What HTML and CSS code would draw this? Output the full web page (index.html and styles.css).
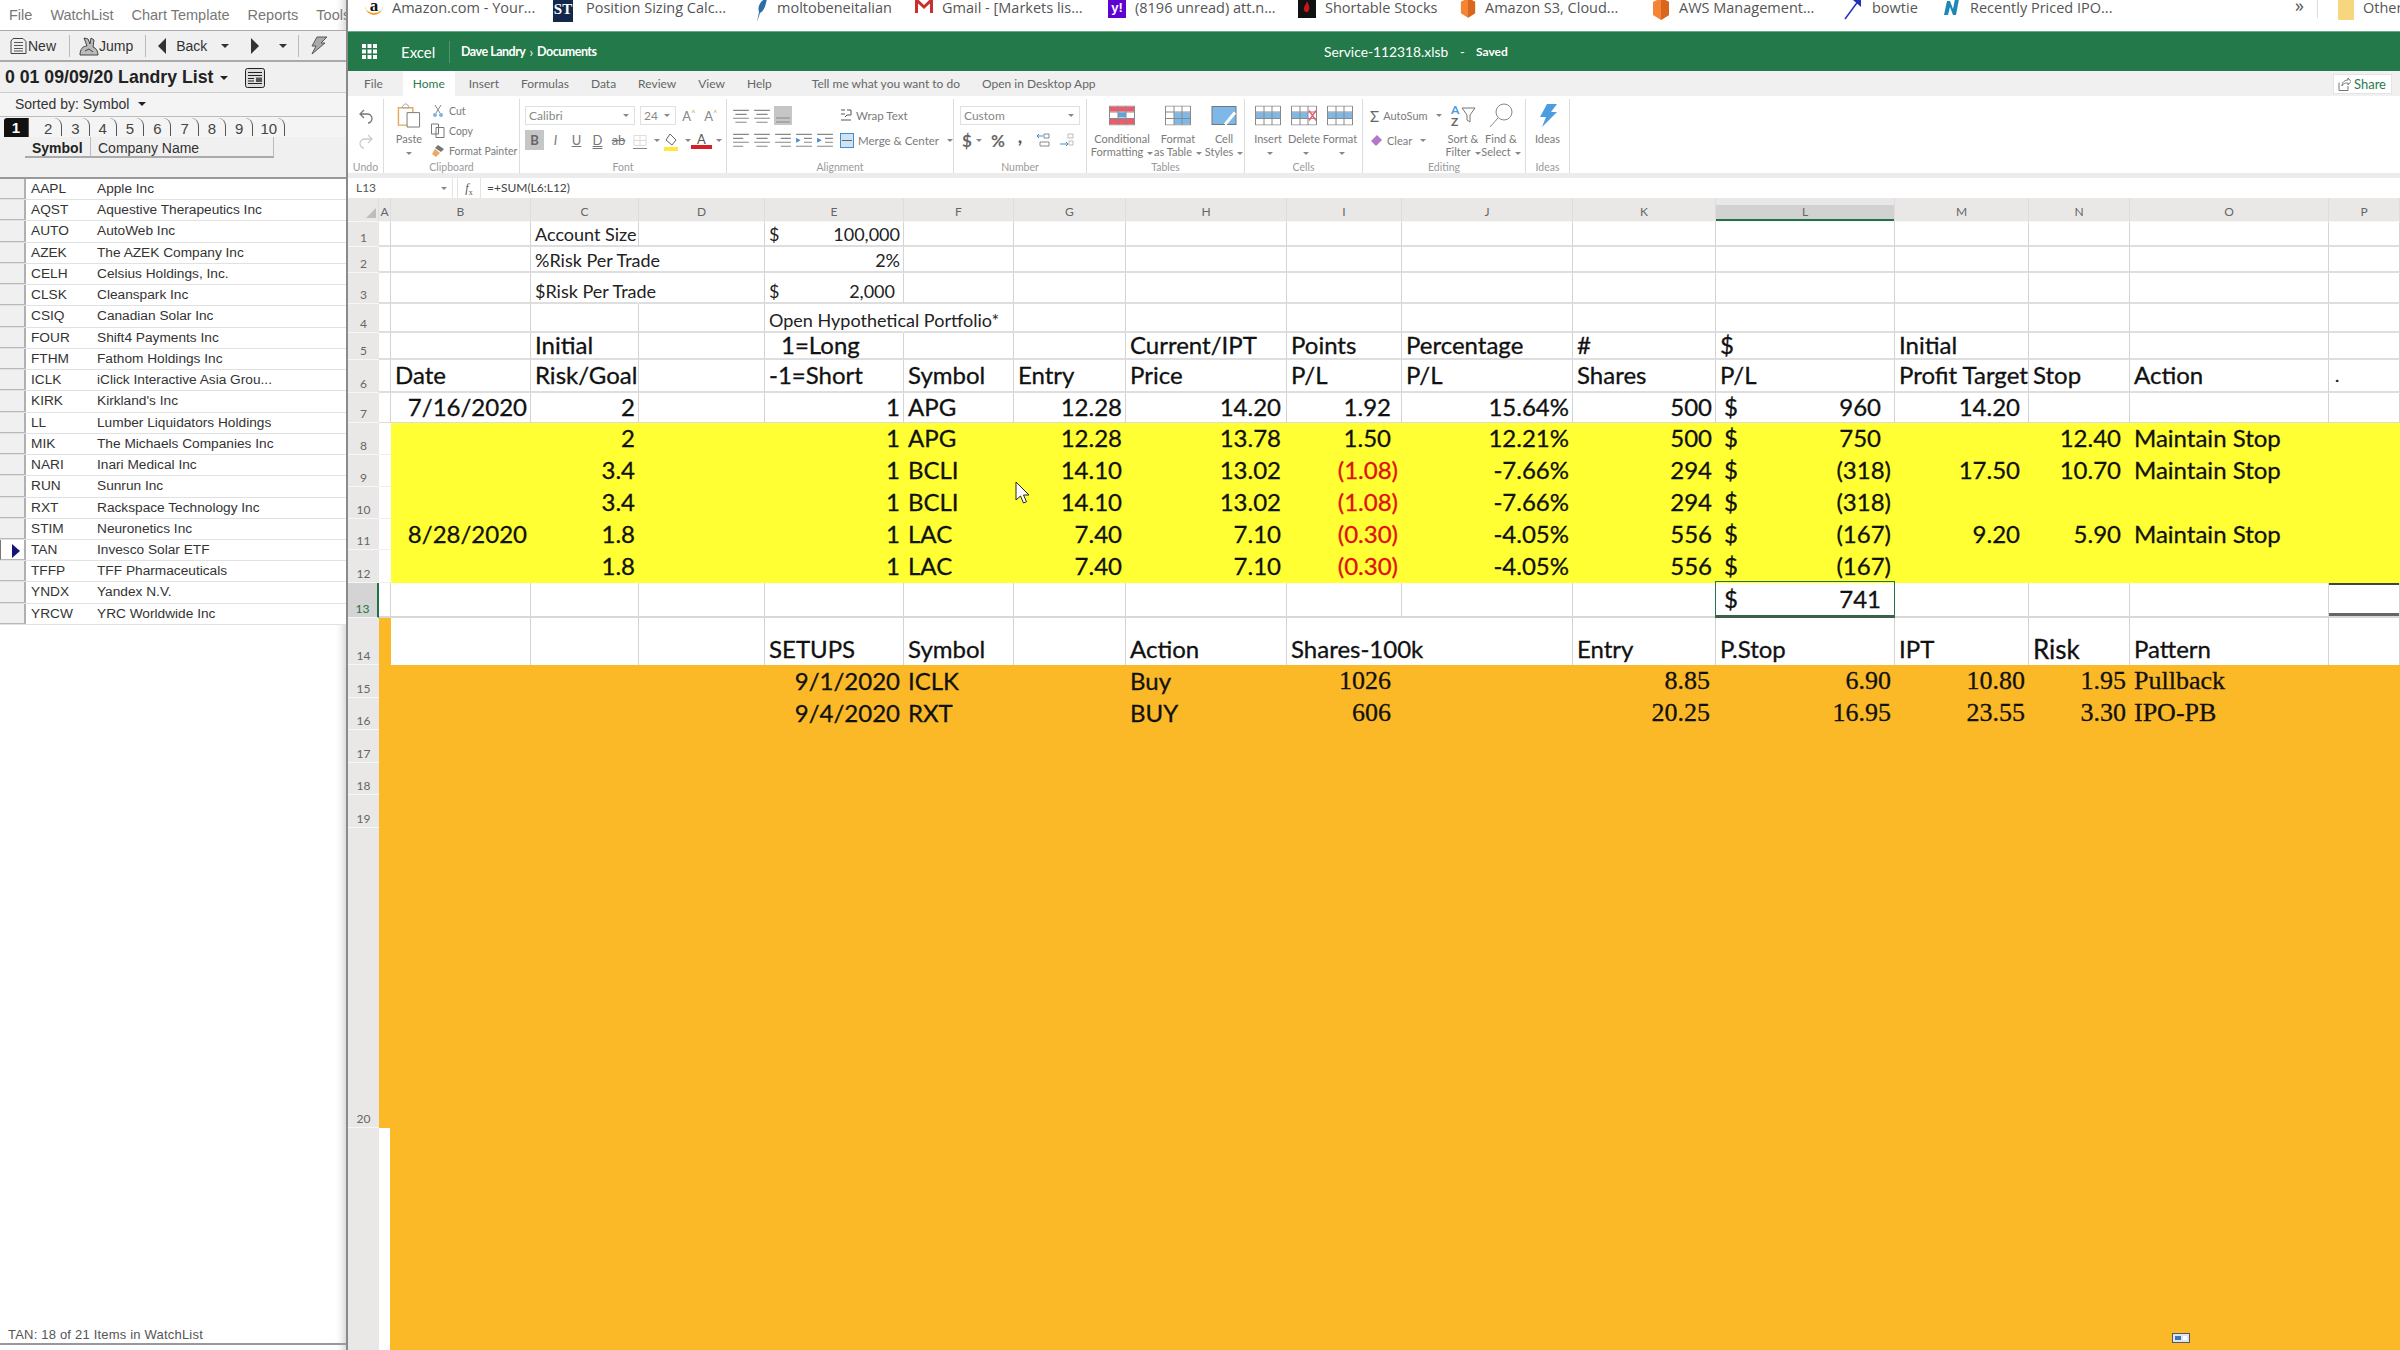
FILE: index.html
```html
<!DOCTYPE html>
<html lang="en">
<head>
    <meta charset="UTF-8">
    <meta name="viewport" content="width=device-width, initial-scale=1.0">
    <title>Service-112318.xlsb - Excel</title>
    <link rel="stylesheet" href="styles.css">
</head>
<body>
<svg class="defs" width="0" height="0">
    <symbol id="i-lines-l" viewBox="0 0 16 16"><path d="M1 3h14M1 6.500h9M1 10h14M1 13.500h9" stroke="#888" fill="none"/></symbol>
    <symbol id="i-lines-c" viewBox="0 0 16 16"><path d="M1 3h14M3 6.500h10M1 10h14M3 13.500h10" stroke="#888" fill="none"/></symbol>
    <symbol id="i-lines-r" viewBox="0 0 16 16"><path d="M1 3h14M6 6.500h9M1 10h14M6 13.500h9" stroke="#888" fill="none"/></symbol>
    <symbol id="i-indent" viewBox="0 0 16 16"><path d="M1 3h14M8 6.500h7M8 10h7M1 13.500h14" stroke="#888" fill="none"/><path d="M1 6l4 2.200-4 2.200z" fill="#3f8fd6"/></symbol>
    <symbol id="i-hex" viewBox="0 0 18 22"><path d="M9 0l8 4v13l-8 5-8-5V4z" fill="#f58534"/><path d="M9 0l8 4v13l-8 5z" fill="#d9661f"/></symbol>
    <symbol id="i-grid" viewBox="0 0 26 20"><path fill="none" stroke="#8a8a8a" d="M.5.500h25v19H.5zM.5 6.500h25M.5 13h25M9 .5v19M17 .5v19"/></symbol>
</svg>

<div class="app">
    <aside class="watch">
        <div class="wmenu"><span>File</span><span>WatchList</span><span>Chart Template</span><span>Reports</span><span>Tools</span></div>
        <div class="wtools">
            <svg class="wicon" width="17" height="18" viewBox="0 0 17 18"><path d="M3 1.500h10l3 3v12H1V4z" fill="#eee" stroke="#444"/><path d="M4 5.500h9M4 8.500h9M4 11.500h9M4 14h9" stroke="#555"/></svg>
            <span class="wt-new">New</span>
            <i class="wsep s1"></i>
            <svg class="wicon j" width="20" height="20" viewBox="0 0 20 20"><path d="M1 19c0-6 3-9 7-9l-3-8 4 1 2 5 1-6 3 2-1 7c3 1 5 4 5 8z" fill="#bbb" stroke="#444"/><path d="M6 15l4-2 4 3" fill="none" stroke="#444"/></svg>
            <span class="wt-jump">Jump</span>
            <i class="wsep s2"></i>
            <i class="tri-l"></i><span class="wt-back">Back</span><i class="caret c1"></i>
            <i class="tri-r"></i><i class="caret c2"></i>
            <i class="wsep s3"></i>
            <svg class="bolt" width="19" height="19" viewBox="0 0 19 19"><path d="M8 1h10l-6 6h4L3 18l4-8H3z" fill="#aaa" stroke="#555"/></svg>
        </div>
        <div class="wtitle">
            <b>0 01 09/09/20 Landry List</b><i class="caret dark"></i>
            <svg class="news" width="20" height="20" viewBox="0 0 20 20"><rect x=".5" y=".5" width="19" height="19" rx="2" fill="#ddd" stroke="#222"/><path d="M3 4.500h14M3 7.500h14M3 10.500h6M3 13h6M3 15.500h14" stroke="#222"/><rect x="11" y="9.500" width="6" height="4.500" fill="#555"/></svg>
        </div>
        <div class="wsort"><span>Sorted by: Symbol</span><i class="caret dark"></i></div>
        <div class="wtabs">
            <span class="wtab on">1</span><span class="wtab">2</span><span class="wtab">3</span><span class="wtab">4</span><span class="wtab">5</span><span class="wtab">6</span><span class="wtab">7</span><span class="wtab">8</span><span class="wtab">9</span><span class="wtab ten">10</span>
        </div>
        <div class="whead"><b>Symbol</b><span>Company Name</span></div>
        <div class="wblank"></div>
        <div class="wlist">
            <div class="wrow"><i></i><span>AAPL</span><span>Apple Inc</span></div>
            <div class="wrow"><i></i><span>AQST</span><span>Aquestive Therapeutics Inc</span></div>
            <div class="wrow"><i></i><span>AUTO</span><span>AutoWeb Inc</span></div>
            <div class="wrow"><i></i><span>AZEK</span><span>The AZEK Company Inc</span></div>
            <div class="wrow"><i></i><span>CELH</span><span>Celsius Holdings, Inc.</span></div>
            <div class="wrow"><i></i><span>CLSK</span><span>Cleanspark Inc</span></div>
            <div class="wrow"><i></i><span>CSIQ</span><span>Canadian Solar Inc</span></div>
            <div class="wrow"><i></i><span>FOUR</span><span>Shift4 Payments Inc</span></div>
            <div class="wrow"><i></i><span>FTHM</span><span>Fathom Holdings Inc</span></div>
            <div class="wrow"><i></i><span>ICLK</span><span>iClick Interactive Asia Grou...</span></div>
            <div class="wrow"><i></i><span>KIRK</span><span>Kirkland's Inc</span></div>
            <div class="wrow"><i></i><span>LL</span><span>Lumber Liquidators Holdings</span></div>
            <div class="wrow"><i></i><span>MIK</span><span>The Michaels Companies Inc</span></div>
            <div class="wrow"><i></i><span>NARI</span><span>Inari Medical Inc</span></div>
            <div class="wrow"><i></i><span>RUN</span><span>Sunrun Inc</span></div>
            <div class="wrow"><i></i><span>RXT</span><span>Rackspace Technology Inc</span></div>
            <div class="wrow"><i></i><span>STIM</span><span>Neuronetics Inc</span></div>
            <div class="wrow cur"><i></i><span>TAN</span><span>Invesco Solar ETF</span></div>
            <div class="wrow"><i></i><span>TFFP</span><span>TFF Pharmaceuticals</span></div>
            <div class="wrow"><i></i><span>YNDX</span><span>Yandex N.V.</span></div>
            <div class="wrow"><i></i><span>YRCW</span><span>YRC Worldwide Inc</span></div>
        </div>
        <div class="wstatus">TAN: 18 of 21 Items in WatchList</div>
    </aside>

    <main class="excel">
        <nav class="bookmarks">
            <div class="bm"><span class="amz">a</span>Amazon.com - Your...</div>
            <div class="bm"><span class="st">ST</span>Position Sizing Calc...</div>
            <div class="bm"><svg width="12" height="24" viewBox="0 0 12 24"><path d="M11 0C5 2 1 8 3 14L1 24l3-9c4-2 6-8 7-15z" fill="#2a6ea8"/></svg>moltobeneitalian</div>
            <div class="bm"><svg width="18" height="16" viewBox="0 0 18 16"><path d="M1.500 15V2L9 9l7.500-7v13" fill="none" stroke="#c9302c" stroke-width="3"/></svg>Gmail - [Markets lis...</div>
            <div class="bm"><span class="yh">y!</span>(8196 unread) att.n...</div>
            <div class="bm"><svg width="18" height="20" viewBox="0 0 18 20"><rect width="18" height="20" fill="#111"/><path d="M9 3c2 4 3 6 2 9s-4 3-5 0 2-5 3-9z" fill="#c4161c"/></svg>Shortable Stocks</div>
            <div class="bm"><svg width="16" height="20"><use href="#i-hex"/></svg>Amazon S3, Cloud...</div>
            <div class="bm"><svg width="18" height="22"><use href="#i-hex"/></svg>AWS Management...</div>
            <div class="bm"><svg width="20" height="22" viewBox="0 0 20 22"><path d="M2 21L16 2" stroke="#2233bb" stroke-width="1.500"/><path d="M10 2h8v7z" fill="#2233bb"/></svg>bowtie</div>
            <div class="bm"><svg width="18" height="18" viewBox="0 0 18 18"><path d="M1 17L4 3h3l3 8 2-10h4l-3 16h-3L7 9l-2 8z" fill="#1d87b5"/></svg>Recently Priced IPO...</div>
            <div class="bm more">&raquo;</div>
            <div class="bm other"><svg width="16" height="22" viewBox="0 0 16 22"><rect width="16" height="22" rx="1" fill="#f6d67f"/></svg>Other</div>
        </nav>

        <header class="titlebar">
            <svg class="waffle" width="15" height="15" viewBox="0 0 15 15" fill="#fff"><path d="M0 0h4v4H0zM5.500 0h4v4h-4zM11 0h4v4h-4zM0 5.500h4v4H0zM5.500 5.500h4v4h-4zM11 5.500h4v4h-4zM0 11h4v4H0zM5.500 11h4v4h-4zM11 11h4v4h-4z"/></svg>
            <span class="app-name">Excel</span>
            <i class="tsep"></i>
            <span class="crumb">Dave Landry</span><span class="crumb-arrow">&rsaquo;</span><span class="crumb">Documents</span>
            <span class="fname">Service-112318.xlsb</span><span class="fdash">-</span><span class="fsaved">Saved</span>
        </header>

        <div class="tabs">
            <span>File</span><span class="home">Home</span><span class="after-home">Insert</span><span>Formulas</span><span>Data</span><span>Review</span><span>View</span><span>Help</span><span class="tell">Tell me what you want to do</span><span>Open in Desktop App</span>
            <button class="share"><svg width="13" height="14" viewBox="0 0 13 14"><path d="M1 5.500v8h9V9M4 9c0-4 3-6 6-6V1l3 3.500L10 8V6C8 6 5 6 4 9z" fill="none" stroke="#777"/></svg>Share</button>
        </div>

        <section class="ribbon">
            <div class="rgroup g-undo">
                <div class="rbody col-c">
                    <svg width="16" height="16" viewBox="0 0 16 16"><path d="M6 2L2 6l4 4M2 6h7c3 0 5 2 5 4.500S12 15 10 15" fill="none" stroke="#777" stroke-width="1.300"/></svg>
                    <svg width="16" height="16" viewBox="0 0 16 16"><path d="M10 2l4 4-4 4M14 6H7c-3 0-5 2-5 4.500S4 15 6 15" fill="none" stroke="#ccc" stroke-width="1.300"/></svg>
                </div>
                <div class="rlabel">Undo</div>
            </div>
            <div class="rgroup g-clip">
                <div class="rbody row">
                    <div class="big paste">
                        <svg width="24" height="26" viewBox="0 0 24 26"><path d="M1 5h15v18H1z" fill="#fff" stroke="#e8a95c" stroke-width="1.500"/><path d="M5 5c0-2 2-4 3.500-4S12 3 12 5z" fill="#fff" stroke="#999"/><path d="M10 10h13v15H10z" fill="#fff" stroke="#777"/></svg>
                        <span>Paste</span><i class="caret"></i>
                    </div>
                    <div class="stack clip">
                        <div class="ri"><svg width="12" height="14" viewBox="0 0 12 14"><path d="M3 1l5 8M9 1L4 9" stroke="#888"/><circle cx="3" cy="11" r="2" fill="#7eb3e0"/><circle cx="9" cy="11" r="2" fill="#7eb3e0"/></svg>Cut</div>
                        <div class="ri"><svg width="14" height="15" viewBox="0 0 14 15"><path d="M.5 1h7v10h-7zM5 4.500h8v10H5z" fill="#fff" stroke="#777"/></svg>Copy</div>
                        <div class="ri"><svg width="14" height="14" viewBox="0 0 14 14"><path d="M7 1l6 4-3 3-6-4z" fill="#777"/><path d="M4 5l5 4-4 4-4-3z" fill="#eda764"/></svg>Format Painter</div>
                    </div>
                </div>
                <div class="rlabel">Clipboard</div>
            </div>
            <div class="rgroup g-font">
                <div class="rbody col">
                    <div class="frow">
                        <div class="select f-name">Calibri<i class="caret"></i></div>
                        <div class="select f-size">24<i class="caret"></i></div>
                        <span class="fgl a-up">A<sup>^</sup></span><span class="fgl a-dn">A<sup>^</sup></span>
                    </div>
                    <div class="frow r2">
                        <span class="fbtn on">B</span><span class="fbtn it">I</span><span class="fbtn un">U</span><span class="fbtn db">D</span><span class="fbtn st-k">ab</span>
                        <span class="fbtn"><svg width="14" height="16" viewBox="0 0 14 16"><path d="M1 1.500h12v10H1zM7 1.500v10M1 6.500h12" fill="none" stroke="#ddd"/><path d="M0 14.500h14" stroke="#888"/></svg></span><i class="caret sm"></i>
                        <span class="fbtn"><svg width="16" height="18" viewBox="0 0 16 18"><path d="M7 1l6 6-4 5-6-5z" fill="#fff" stroke="#666"/><rect x="1" y="14" width="14" height="4" fill="#ffe83d"/></svg></span><i class="caret sm"></i>
                        <span class="fbtn col-a">A</span><i class="caret sm"></i>
                    </div>
                </div>
                <div class="rlabel">Font</div>
            </div>
            <div class="rgroup g-align">
                <div class="rbody row">
                    <div class="col al">
                        <div class="frow al-r1">
                            <svg width="18" height="18"><use href="#i-lines-c"/></svg><svg width="18" height="18"><use href="#i-lines-c"/></svg><span class="al-on"><svg width="18" height="8" viewBox="0 0 18 8"><path d="M2 2h14M2 6h14" stroke="#888"/></svg></span>
                        </div>
                        <div class="frow al-r2">
                            <svg width="18" height="18"><use href="#i-lines-l"/></svg><svg width="18" height="18"><use href="#i-lines-c"/></svg><svg width="18" height="18"><use href="#i-lines-r"/></svg><svg width="18" height="18"><use href="#i-indent"/></svg><svg width="18" height="18"><use href="#i-indent"/></svg>
                        </div>
                    </div>
                    <div class="stack wide">
                        <div class="ri"><svg width="12" height="15" viewBox="0 0 12 15"><path d="M1 2h4M1 6h4M7 2h4v5H7M7 7l-2 2M1 12h10" stroke="#555" fill="none"/></svg>Wrap Text</div>
                        <div class="ri"><svg width="14" height="15" viewBox="0 0 14 15"><rect x=".5" y=".5" width="13" height="14" fill="#cfe3f5" stroke="#3f8fd6"/><path d="M2 7.500h10" stroke="#666"/></svg>Merge &amp; Center<i class="caret sm"></i></div>
                    </div>
                </div>
                <div class="rlabel">Alignment</div>
            </div>
            <div class="rgroup g-num">
                <div class="rbody col">
                    <div class="select n-fmt">Custom<i class="caret"></i></div>
                    <div class="frow n-r2">
                        <b class="dollar">$</b><i class="caret sm"></i><b class="pct">%</b><b class="comma">,</b>
                        <svg width="16" height="16" viewBox="0 0 16 16"><path d="M8 4H2m2-2L2 4l2 2" stroke="#3f8fd6" fill="none"/><path d="M9 2h5v4H9zM5 10h9v4H5z" fill="none" stroke="#888"/></svg>
                        <svg width="16" height="16" viewBox="0 0 16 16"><path d="M1 12h8m-2-2l2 2-2 2" stroke="#3f8fd6" fill="none"/><path d="M9 2h5v4H9zM10 9h4v4h-4z" fill="none" stroke="#bbb"/></svg>
                    </div>
                </div>
                <div class="rlabel">Number</div>
            </div>
            <div class="rgroup g-tbl">
                <div class="rbody row">
                    <div class="big w-cond"><svg width="26" height="20" viewBox="0 0 26 20"><rect width="26" height="20" fill="#fff"/><path d="M1 1h24v5H1zM1 13h24v6H1z" fill="#ef5a6b"/><path d="M9 7h8v5H9z" fill="#5aa6e0"/><use href="#i-grid" width="26" height="20"/></svg><span>Conditional<br>Formatting<i class="caret sm"></i></span></div>
                    <div class="big w-fmt"><svg width="26" height="20" viewBox="0 0 26 20"><path d="M9 7h16v12H9z" fill="#7db8e8"/><use href="#i-grid" width="26" height="20"/></svg><span>Format<br>as Table<i class="caret sm"></i></span></div>
                    <div class="big w-cell"><svg width="26" height="20" viewBox="0 0 26 20"><rect x="1" y="1" width="24" height="18" fill="#7db8e8" stroke="#777"/><path d="M14 19l10-12" stroke="#fff" stroke-width="3"/></svg><span>Cell<br>Styles<i class="caret sm"></i></span></div>
                </div>
                <div class="rlabel">Tables</div>
            </div>
            <div class="rgroup g-cells">
                <div class="rbody row">
                    <div class="big w-36"><svg width="26" height="20" viewBox="0 0 26 20"><path d="M1 7h24v6H1z" fill="#7db8e8"/><use href="#i-grid" width="26" height="20"/></svg><span>Insert<br><i class="caret sm"></i></span></div>
                    <div class="big w-36"><svg width="26" height="20" viewBox="0 0 26 20"><path d="M1 7h16v6H1z" fill="#7db8e8"/><use href="#i-grid" width="26" height="20"/><path d="M18 5l7 10M25 5l-7 10" stroke="#e8637a" stroke-width="1.500"/></svg><span>Delete<br><i class="caret sm"></i></span></div>
                    <div class="big w-36"><svg width="26" height="20" viewBox="0 0 26 20"><path d="M1 7h24v6H1z" fill="#7db8e8"/><use href="#i-grid" width="26" height="20"/></svg><span>Format<br><i class="caret sm"></i></span></div>
                </div>
                <div class="rlabel">Cells</div>
            </div>
            <div class="rgroup g-edit">
                <div class="rbody row">
                    <div class="stack ed">
                        <div class="ri"><span class="sigma">&Sigma;</span>AutoSum<i class="caret sm"></i></div>
                        <div class="ri"><svg width="13" height="13" viewBox="0 0 13 13"><path d="M7 1l5 5-6 6-5-5z" fill="#b578c9"/></svg>Clear<i class="caret sm"></i></div>
                    </div>
                    <div class="big w-38"><svg width="26" height="25" viewBox="0 0 26 25"><text x="1" y="11" class="az blue">A</text><text x="1" y="23" class="az">Z</text><path d="M12 5h13l-5 7v7l-3-2v-5z" fill="none" stroke="#777"/></svg><span>Sort &amp;<br>Filter<i class="caret sm"></i></span></div>
                    <div class="big w-38"><svg width="26" height="25" viewBox="0 0 26 25"><circle cx="16" cy="9" r="8" fill="none" stroke="#888"/><path d="M10 15L2 24" stroke="#888"/></svg><span>Find &amp;<br>Select<i class="caret sm"></i></span></div>
                </div>
                <div class="rlabel">Editing</div>
            </div>
            <div class="rgroup g-ideas">
                <div class="rbody row">
                    <div class="big"><svg width="20" height="25" viewBox="0 0 20 25"><path d="M9 1h10l-6 8h6L4 24l4-10H2z" fill="#4d9be0"/></svg><span>Ideas</span></div>
                </div>
                <div class="rlabel">Ideas</div>
            </div>
        </section>

        <div class="formula">
            <div class="namebox">L13<i class="caret"></i></div>
            <div class="fx"><i>f</i><sub>x</sub></div>
            <div class="finput">=+SUM(L6:L12)</div>
        </div>

        <div class="sheet">
            <table class="grid">
                <colgroup>
                    <col class="c-hd"><col class="c-a"><col class="c-b"><col class="c-c"><col class="c-d"><col class="c-e"><col class="c-f"><col class="c-g"><col class="c-h"><col class="c-i"><col class="c-j"><col class="c-k"><col class="c-l"><col class="c-m"><col class="c-n"><col class="c-o"><col class="c-p">
                </colgroup>
                <tr class="colhead"><th class="corner"><i></i></th><th>A</th><th>B</th><th>C</th><th>D</th><th>E</th><th>F</th><th>G</th><th>H</th><th>I</th><th>J</th><th>K</th><th class="sel-col"><span>L</span></th><th>M</th><th>N</th><th>O</th><th>P</th></tr>

                <tr class="r1 small"><th>1</th><td></td><td></td><td>Account Size</td><td></td><td class="n"><span class="cash">$</span>100,000</td><td></td><td></td><td></td><td></td><td></td><td></td><td></td><td></td><td></td><td></td><td></td></tr>
                <tr class="r2 small"><th>2</th><td></td><td></td><td class="nl">%Risk Per Trade</td><td></td><td class="n">2%</td><td></td><td></td><td></td><td></td><td></td><td></td><td></td><td></td><td></td><td></td><td></td></tr>
                <tr class="r3 small"><th>3</th><td></td><td></td><td class="nl">$Risk Per Trade</td><td></td><td class="n pad8"><span class="cash">$</span>2,000</td><td></td><td></td><td></td><td></td><td></td><td></td><td></td><td></td><td></td><td></td><td></td></tr>
                <tr class="r4 small"><th>4</th><td></td><td></td><td></td><td></td><td class="nl">Open Hypothetical Portfolio*</td><td></td><td></td><td></td><td></td><td></td><td></td><td></td><td></td><td></td><td></td><td></td></tr>
                <tr class="r5"><th>5</th><td></td><td></td><td>Initial</td><td></td><td class="ind">1=Long</td><td></td><td></td><td>Current/IPT</td><td>Points</td><td>Percentage</td><td>#</td><td>$</td><td>Initial</td><td></td><td></td><td></td></tr>
                <tr class="r6"><th>6</th><td></td><td>Date</td><td>Risk/Goal</td><td></td><td>-1=Short</td><td>Symbol</td><td>Entry</td><td>Price</td><td>P/L</td><td>P/L</td><td>Shares</td><td>P/L</td><td>Profit Target</td><td>Stop</td><td>Action</td><td class="dot">.</td></tr>
                <tr class="r7"><th>7</th><td></td><td class="n">7/16/2020</td><td class="n">2</td><td></td><td class="n">1</td><td>APG</td><td class="n">12.28</td><td class="n pad5">14.20</td><td class="n pad10">1.92</td><td class="n">15.64%</td><td class="n">500</td><td class="n pad13 acct"><span class="cash">$</span>960</td><td class="n pad8">14.20</td><td></td><td></td><td></td></tr>
                <tr class="r8 hl"><th>8</th><td class="a"></td><td></td><td class="n">2</td><td></td><td class="n">1</td><td>APG</td><td class="n">12.28</td><td class="n pad5">13.78</td><td class="n pad10">1.50</td><td class="n">12.21%</td><td class="n">500</td><td class="n pad13 acct"><span class="cash">$</span>750</td><td></td><td class="n pad8">12.40</td><td>Maintain Stop</td><td></td></tr>
                <tr class="r9 hl"><th>9</th><td class="a"></td><td></td><td class="n">3.4</td><td></td><td class="n">1</td><td>BCLI</td><td class="n">14.10</td><td class="n pad5">13.02</td><td class="n red">(1.08)</td><td class="n">-7.66%</td><td class="n">294</td><td class="n acct"><span class="cash">$</span>(318)</td><td class="n pad8">17.50</td><td class="n pad8">10.70</td><td>Maintain Stop</td><td></td></tr>
                <tr class="r10 hl"><th>10</th><td class="a"></td><td></td><td class="n">3.4</td><td></td><td class="n">1</td><td>BCLI</td><td class="n">14.10</td><td class="n pad5">13.02</td><td class="n red">(1.08)</td><td class="n">-7.66%</td><td class="n">294</td><td class="n acct"><span class="cash">$</span>(318)</td><td></td><td></td><td></td><td></td></tr>
                <tr class="r11 hl"><th>11</th><td class="a"></td><td class="n">8/28/2020</td><td class="n">1.8</td><td></td><td class="n">1</td><td>LAC</td><td class="n">7.40</td><td class="n pad5">7.10</td><td class="n red">(0.30)</td><td class="n">-4.05%</td><td class="n">556</td><td class="n acct"><span class="cash">$</span>(167)</td><td class="n pad8">9.20</td><td class="n pad8">5.90</td><td>Maintain Stop</td><td></td></tr>
                <tr class="r12 hl"><th>12</th><td class="a"></td><td></td><td class="n">1.8</td><td></td><td class="n">1</td><td>LAC</td><td class="n">7.40</td><td class="n pad5">7.10</td><td class="n red">(0.30)</td><td class="n">-4.05%</td><td class="n">556</td><td class="n acct"><span class="cash">$</span>(167)</td><td></td><td></td><td></td><td></td></tr>
                <tr class="r13"><th class="sel-row">13</th><td></td><td></td><td></td><td></td><td></td><td></td><td></td><td></td><td></td><td></td><td></td><td class="n pad13 acct sel-cell"><span class="cash">$</span>741</td><td></td><td></td><td></td><td class="ruled"></td></tr>
                <tr class="r14"><th>14</th><td class="a-org"></td><td></td><td></td><td></td><td>SETUPS</td><td>Symbol</td><td></td><td>Action</td><td class="nl">Shares-100k</td><td></td><td>Entry</td><td>P.Stop</td><td>IPT</td><td class="big-t">Risk</td><td>Pattern</td><td></td></tr>
                <tr class="r15 org"><th>15</th><td></td><td></td><td></td><td></td><td class="n">9/1/2020</td><td>ICLK</td><td></td><td>Buy</td><td class="n tm pad10">1026</td><td></td><td class="n tm pad5">8.85</td><td class="n tm">6.90</td><td class="n tm">10.80</td><td class="n tm">1.95</td><td class="tm">Pullback</td><td></td></tr>
                <tr class="r16 org"><th>16</th><td></td><td></td><td></td><td></td><td class="n">9/4/2020</td><td>RXT</td><td></td><td>BUY</td><td class="n tm pad10">606</td><td></td><td class="n tm pad5">20.25</td><td class="n tm">16.95</td><td class="n tm">23.55</td><td class="n tm">3.30</td><td class="tm">IPO-PB</td><td></td></tr>
                <tr class="r17 org"><th>17</th><td></td><td></td><td></td><td></td><td></td><td></td><td></td><td></td><td></td><td></td><td></td><td></td><td></td><td></td><td></td><td></td></tr>
                <tr class="r18 org"><th>18</th><td></td><td></td><td></td><td></td><td></td><td></td><td></td><td></td><td></td><td></td><td></td><td></td><td></td><td></td><td></td><td></td></tr>
                <tr class="r19 org"><th>19</th><td></td><td></td><td></td><td></td><td></td><td></td><td></td><td></td><td></td><td></td><td></td><td></td><td></td><td></td><td></td><td></td></tr>
                <tr class="r20 org"><th>20</th><td></td><td></td><td></td><td></td><td></td><td></td><td></td><td></td><td></td><td></td><td></td><td></td><td></td><td></td><td></td><td></td></tr>
            </table>
            <div class="sheet-rest"><i class="rest-hd"></i><i class="rest-a"></i><i class="rest-org"></i></div>
        </div>
    </main>
</div>

<svg class="cursor" width="16" height="24" viewBox="0 0 16 24"><path d="M1 1v18l4.500-4 3 7 3-1.300-3-6.700H14z" fill="#fff" stroke="#222"/></svg>
<svg class="view-icon" width="18" height="10" viewBox="0 0 18 10"><rect x=".5" y=".5" width="17" height="9" fill="#dce6ee" stroke="#556"/><rect x="3" y="3" width="6" height="4" fill="#3a78b5"/><rect x="11" y="3" width="4" height="4" fill="#fff"/></svg>
</body>
</html>
```

FILE: styles.css
```css
* {
    box-sizing: border-box;
}
html, body {
    margin: 0;
    height: 100%;
    overflow: hidden;
    background: #fff;
}
body {
    position: relative;
    font-family: "Liberation Sans", Arial, sans-serif;
}
i {
    font-style: normal;
}
.defs {
    position: absolute;
}
.app {
    display: flex;
    width: 2400px;
    height: 1350px;
}

/* watchlist panel */
.watch {
    width: 348px;
    flex: none;
    display: flex;
    flex-direction: column;
    position: relative;
    overflow: hidden;
    background: #fff;
    color: #333;
    border-right: 2px solid #8a8a8a;
    box-shadow: inset -12px 0 10px -10px #ccc;
}
.wmenu {
    height: 31px;
    padding-left: 9px;
    display: flex;
    gap: 18px;
    align-items: center;
    font-size: 14.500px;
    color: #777;
    border-bottom: 1px solid #aaa;
    white-space: nowrap;
}
.wtools {
    height: 31px;
    display: flex;
    align-items: center;
    flex: none;
    font-size: 14px;
    background: #f0f0f0;
    border-bottom: 2px solid #aaa;
    padding-left: 10px;
}
.wicon.j {
    margin-left: 9px;
}
.wt-new {
    margin-left: 1px;
}
.wsep {
    width: 1px;
    height: 22px;
    background: #bbb;
}
.wsep.s1 {
    margin-left: 13px;
}
.wt-jump {
    margin-left: 0;
}
.wsep.s2 {
    margin-left: 12px;
}
.tri-l, .tri-r {
    width: 0;
    height: 0;
    border-top: 8px solid transparent;
    border-bottom: 8px solid transparent;
}
.tri-l {
    margin-left: 12px;
    border-right: 8px solid #333;
}
.tri-r {
    margin-left: 22px;
    border-left: 8px solid #333;
}
.wt-back {
    margin-left: 10px;
}
.caret {
    display: inline-block;
    width: 0;
    height: 0;
    border-left: 4px solid transparent;
    border-right: 4px solid transparent;
    border-top: 4px solid #888;
}
.caret.sm {
    border-left-width: 3px;
    border-right-width: 3px;
    border-top-width: 3px;
    margin-left: 4px;
    vertical-align: middle;
}
.caret.dark {
    border-top-color: #222;
}
.caret.c1 {
    border-top-color: #333;
    margin-left: 14px;
}
.caret.c2 {
    border-top-color: #333;
    margin-left: 20px;
}
.wsep.s3 {
    margin-left: 11px;
}
.bolt {
    margin-left: 10px;
}
.wtitle {
    height: 30px;
    flex: none;
    display: flex;
    align-items: center;
    padding: 1px 0 0 5px;
    font-size: 17.700px;
    background: #f0f0f0;
    color: #222;
    white-space: nowrap;
}
.wtitle .caret {
    margin-left: 7px;
}
.news {
    margin-left: 17px;
}
.wsort {
    height: 25px;
    flex: none;
    display: flex;
    align-items: center;
    gap: 9px;
    padding: 0 0 2px 15px;
    font-size: 14px;
    background: #f4f4f4;
    border-top: 1px solid #ccc;
    border-bottom: 1px solid #bbb;
}
.wtabs {
    height: 20px;
    flex: none;
    display: flex;
    padding-left: 4px;
    background: #f4f4f4;
    font-size: 15px;
    line-height: 21px;
}
.wtab {
    width: 27.300px;
    text-align: center;
    color: #444;
    border-right: 1.500px solid #555;
    border-top-right-radius: 8px;
    height: 18px;
    margin-top: 1px;
}
.wtab.on {
    width: 25px;
    margin-right: 6px;
    height: 19px;
    font-weight: bold;
    color: #fff;
    background: #111;
    border-radius: 3px 0 0 0;
    line-height: 20px;
}
.wtab.ten {
    width: 32px;
}
.whead {
    height: 21px;
    flex: none;
    display: flex;
    padding-left: 25px;
    font-size: 14px;
    line-height: 22px;
    background: #f0f0f0;
    color: #333;
}
.whead b {
    width: 66px;
    padding-left: 7px;
    border-bottom: 2px solid #aaa;
    border-right: 1px solid #bbb;
    color: #222;
}
.whead span {
    width: 183px;
    padding-left: 7px;
    border-bottom: 2px solid #aaa;
    border-right: 1px solid #bbb;
}
.wblank {
    height: 21px;
    flex: none;
    background: #f0f0f0;
    border-bottom: 2px solid #999;
}
.wlist {
    flex: none;
    background: #fff;
}
.wrow {
    height: 21.240px;
    display: grid;
    grid-template-columns: 26px 71px 1fr;
    font-size: 13.700px;
    line-height: 20px;
    border-bottom: 1px solid #e2e2e2;
    color: #333;
}
.wrow > span {
    white-space: nowrap;
    padding-left: 5px;
}
.wrow > span:last-child {
    padding-left: 0;
}
.wrow i {
    background: #f0f0f0;
    border-right: 2px solid #b0b0b0;
    border-bottom: 1px solid #b8b8b8;
}
.wrow.cur i {
    position: relative;
    background: #fff;
    border-left: 1px solid #777;
}
.wrow.cur i::after {
    content: "";
    position: absolute;
    left: 11px;
    top: 4px;
    border-top: 7px solid transparent;
    border-bottom: 7px solid transparent;
    border-left: 8px solid #14147a;
}
.wstatus {
    margin-top: auto;
    height: 24px;
    padding-left: 8px;
    font-size: 13px;
    line-height: 27px;
    letter-spacing: .2px;
    color: #555;
    border-bottom: 2px solid #999;
    margin-bottom: 5px;
    white-space: nowrap;
}

/* excel */
.excel {
    flex: 1;
    min-width: 0;
    display: flex;
    flex-direction: column;
    font-family: Lato, sans-serif;
}
.bookmarks {
    height: 31px;
    flex: none;
    display: grid;
    grid-template-columns: 188px 203px 159px 193px 190px 162px 192px 191px 100px 347px 28px 82px;
    padding-left: 17px;
    overflow: hidden;
    font-family: "Open Sans", sans-serif;
    font-size: 14.500px;
    line-height: 15px;
    color: #555;
    white-space: nowrap;
}
.bm {
    display: flex;
    gap: 9px;
    align-items: flex-start;
}
.bm > svg {
    margin-top: -2px;
    flex: none;
}
.amz {
    position: relative;
    width: 18px;
    font: bold 17px/15px "Liberation Serif", serif;
    color: #111;
    text-align: center;
    border-bottom: 2px solid #f4a11f;
    border-radius: 0 0 10px 10px;
    margin-top: -2px;
}
.st {
    width: 20px;
    height: 25px;
    margin-top: -3px;
    margin-right: 4px;
    background: #13294b;
    color: #fff;
    font: bold 15px/25px "Liberation Serif", serif;
    text-align: center;
}
.yh {
    width: 18px;
    height: 20px;
    margin-top: -2px;
    background: #5f01d1;
    color: #fff;
    font: bold 13px/20px "Liberation Sans", sans-serif;
    text-align: center;
}
.bm.more {
    font-size: 18px;
    color: #555;
    padding-left: 5px;
    border-right: 1px solid #ddd;
    height: 20px;
    margin-top: -2px;
}
.bm.other {
    padding-left: 20px;
}
.titlebar {
    height: 40px;
    flex: none;
    display: flex;
    align-items: center;
    padding-left: 14px;
    background: #24794a;
    border-top: 1px solid #6da886;
    color: #fff;
    font-size: 13px;
    white-space: nowrap;
}
.app-name {
    margin-left: 24px;
    font-size: 15px;
    width: 48px;
}
.tsep {
    width: 1px;
    height: 22px;
    background: #4f9470;
}
.crumb {
    font-size: 12.500px;
    font-weight: bold;
    letter-spacing: -.5px;
}
.tsep + .crumb {
    margin-left: 11px;
}
.crumb-arrow {
    margin: 0 4px;
}
.fname {
    position: absolute;
    left: 1324px;
    font-size: 13.800px;
}
.fdash {
    position: absolute;
    left: 1460px;
}
.fsaved {
    position: absolute;
    left: 1476px;
    font-size: 12px;
    font-weight: bold;
}
.tabs {
    height: 25px;
    flex: none;
    position: relative;
    display: flex;
    align-items: center;
    padding-left: 5px;
    background: #f0f0f0;
    font-size: 12px;
    color: #666;
    white-space: nowrap;
}
.tabs > span {
    padding: 0 11px;
    line-height: 25px;
}
.tabs > .home {
    margin-left: 9px;
    padding: 0 10px;
    width: 52px;
    background: #fff;
    color: #2a7a4e;
}
.tabs > .after-home {
    margin-left: 3px;
}
.tabs > .tell {
    margin-left: 18px;
}
.share {
    position: absolute;
    right: 8px;
    top: 3px;
    height: 20px;
    width: 59px;
    display: flex;
    gap: 3px;
    align-items: center;
    padding: 0 4px;
    background: #fff;
    border: 1px solid #e4e4e4;
    color: #2a7a4e;
    font: 13px Lato, sans-serif;
}

/* ribbon */
.ribbon {
    height: 82px;
    flex: none;
    display: flex;
    background: #fff;
    border-bottom: 5px solid #ececec;
    font-size: 11px;
    color: #7b7b7b;
    white-space: nowrap;
}
.rgroup {
    display: flex;
    flex-direction: column;
    height: 74px;
    margin-top: 3px;
    border-right: 1px solid #ddd;
}
.rbody {
    flex: 1;
    min-height: 0;
    padding-top: 4px;
}
.rlabel {
    height: 13px;
    line-height: 15px;
    text-align: center;
    color: #9a9a9a;
    font-size: 10.500px;
}
.row {
    display: flex;
}
.col {
    display: flex;
    flex-direction: column;
}
.col-c {
    display: flex;
    flex-direction: column;
    align-items: center;
    gap: 9px;
    padding-top: 9px;
}
.g-undo {
    width: 36px;
}
.g-clip {
    width: 136px;
}
.g-font {
    width: 207px;
}
.g-align {
    width: 227px;
}
.g-num {
    width: 133px;
}
.g-tbl {
    width: 158px;
}
.g-cells {
    width: 118px;
}
.g-edit {
    width: 163px;
}
.g-ideas {
    width: 44px;
}
.big {
    display: flex;
    flex-direction: column;
    align-items: center;
    line-height: 13px;
    text-align: center;
}
.big > svg {
    flex: none;
    height: 25px;
    margin-bottom: 4px;
}
.paste {
    width: 34px;
    margin-left: 8px;
    margin-right: 5px;
}
.paste .caret {
    margin-top: 7px;
    border-left-width: 3px;
    border-right-width: 3px;
    border-top-width: 3px;
}
.stack {
    display: flex;
    flex-direction: column;
    gap: 5px;
    padding-top: 4px;
}
.stack.clip {
    padding-top: 0;
    font-size: 10.500px;
}
.ri {
    display: flex;
    align-items: center;
    gap: 4px;
    height: 15px;
}
.g-clip .ri > svg {
    width: 14px;
}
.frow {
    display: flex;
    align-items: center;
}
.g-font .rbody {
    padding: 7px 0 0 5px;
}
.select {
    position: relative;
    height: 19px;
    line-height: 17px;
    padding-left: 3px;
    border: 1px solid #e0e0e0;
    font-size: 12px;
    color: #888;
}
.select .caret {
    position: absolute;
    right: 5px;
    top: 7px;
    border-left-width: 3px;
    border-right-width: 3px;
    border-top-width: 3px;
}
.f-name {
    width: 110px;
}
.f-size {
    width: 36px;
    margin-left: 5px;
}
.fgl {
    font-size: 13px;
    width: 22px;
    text-align: center;
    color: #888;
}
.fgl sup {
    font-size: 8px;
    color: #e0a040;
    line-height: 0;
}
.a-up {
    margin-left: 2px;
}
.frow.r2 {
    margin-top: 5px;
    height: 20px;
}
.fbtn {
    width: 21px;
    height: 20px;
    line-height: 20px;
    text-align: center;
    font-size: 13px;
    color: #777;
}
.fbtn.on {
    width: 19px;
    margin-right: 1px;
    background: #c6c6c6;
    font-weight: bold;
    color: #666;
}
.fbtn.it {
    font-style: italic;
}
.fbtn.un {
    text-decoration: underline;
}
.fbtn.db {
    text-decoration: underline double;
}
.fbtn.st-k {
    text-decoration: line-through;
}
.fbtn.col-a {
    color: #555;
    border-bottom: 4px solid #d81f26;
    height: 17px;
    line-height: 15px;
    margin-bottom: -1px;
}
.fbtn svg {
    vertical-align: middle;
}
.al {
    width: 121px;
    padding-left: 5px;
}
.g-align .rbody {
    padding-top: 7px;
}
.al-r1 {
    gap: 3px;
    height: 19px;
}
.al-on {
    width: 18px;
    height: 19px;
    padding-top: 10px;
    background: #c6c6c6;
    display: block;
}
.al-on svg {
    display: block;
}
.al-r2 {
    gap: 3px;
    margin-top: 6px;
}
.stack.wide {
    gap: 10px;
    padding-top: 2px;
    font-size: 11.500px;
}
.g-num .rbody {
    padding: 7px 0 0 6px;
}
.n-fmt {
    width: 120px;
}
.n-r2 {
    margin-top: 5px;
    height: 20px;
}
.dollar {
    margin-left: 2px;
    font-size: 17px;
    color: #666;
}
.pct {
    margin-left: 9px;
    font-size: 17px;
    color: #666;
}
.comma {
    margin-left: 13px;
    margin-top: -10px;
    font-size: 19px;
    color: #555;
}
.n-r2 svg {
    margin-left: 8px;
}
.n-r2 svg:first-of-type {
    margin-left: 13px;
}
.w-cond {
    width: 52px;
    margin-left: 9px;
}
.w-fmt {
    width: 46px;
    margin-left: 7px;
}
.w-cell {
    width: 36px;
    margin-left: 5px;
}
.w-36 {
    width: 36px;
}
.g-cells .rbody {
    padding-left: 5px;
}
.g-edit .rbody {
    padding-left: 7px;
}
.stack.ed {
    width: 74px;
    gap: 10px;
    padding-top: 5px;
}
.sigma {
    font-size: 15px;
    color: #666;
}
.w-38 {
    width: 38px;
}
.az {
    font: bold 12px Lato, sans-serif;
    fill: #666;
}
.az.blue {
    fill: #4d9be0;
}
.g-ideas .big {
    width: 44px;
}
.formula {
    height: 20px;
    flex: none;
    display: flex;
    padding-left: 4px;
    background: #fff;
    font-size: 12px;
    line-height: 20px;
    color: #555;
}
.namebox {
    position: relative;
    width: 101px;
    padding-left: 4px;
    border-right: 1px solid #e3e3e3;
}
.namebox .caret {
    position: absolute;
    right: 5px;
    top: 9px;
    border-left-width: 3px;
    border-right-width: 3px;
    border-top-width: 3px;
}
.fx {
    width: 24px;
    margin-left: 4px;
    text-align: center;
    border-right: 1px solid #e3e3e3;
    border-left: 1px solid #e3e3e3;
    font-family: "Liberation Serif", serif;
}
.fx i {
    font-style: italic;
}
.fx sub {
    font-size: 8px;
}
.finput {
    padding-left: 6px;
    color: #444;
}

/* sheet */
.sheet {
    flex: 1;
    min-height: 0;
    display: flex;
    flex-direction: column;
}
.grid {
    width: 2052px;
    table-layout: fixed;
    border-collapse: separate;
    border-spacing: 0;
    color: #111;
    font-size: 24px;
    line-height: 22px;
    flex: none;
}
.c-hd { width: 31px; }
.c-a { width: 12px; }
.c-b { width: 140px; }
.c-c { width: 108px; }
.c-d { width: 126px; }
.c-e { width: 139px; }
.c-f { width: 110px; }
.c-g { width: 112px; }
.c-h { width: 161px; }
.c-i { width: 115px; }
.c-j { width: 171px; }
.c-k { width: 143px; }
.c-l { width: 179px; }
.c-m { width: 134px; }
.c-n { width: 101px; }
.c-o { width: 199px; }
.c-p { width: 71px; }
.grid th {
    padding: 0 0 2px;
    background: #e9e8e7;
    color: #666;
    font-size: 12px;
    line-height: 12px;
    font-weight: normal;
    vertical-align: bottom;
    border-bottom: 1px solid #f6f6f6;
}
.grid td {
    padding: 0 3px 1px 4px;
    white-space: nowrap;
    border-right: 1px solid #d4d4d4;
    border-bottom: 1px solid #dcdcdc;
    background: #fff;
    -webkit-text-stroke: .3px;
}
.grid .nl {
    border-right-color: transparent;
}
.colhead th {
    height: 23px;
    padding-bottom: 3px;
    border-right: 1px solid #ddd;
}
.colhead .corner {
    position: relative;
}
.corner i {
    position: absolute;
    right: 2px;
    bottom: 3px;
    border-left: 10px solid transparent;
    border-bottom: 10px solid #bdbdbd;
}
.colhead .sel-col {
    padding: 7px 0 0;
    background: #e9e8e7;
}
.sel-col span {
    display: block;
    height: 16px;
    line-height: 14px;
    background: #d2d2d2;
    border-bottom: 2px solid #217346;
}
.grid .small td {
    font-size: 18px;
    line-height: 20px;
    vertical-align: bottom;
    border-bottom: 2px solid #dedede;
    color: #222;
    -webkit-text-stroke: 0;
}
.r1 td, .r1 th { height: 25px; }
.r2 td, .r2 th { height: 26px; }
.r3 td, .r3 th { height: 31px; }
.r4 td, .r4 th { height: 29px; }
.r5 td, .r5 th { height: 27px; }
.r6 td, .r6 th { height: 33px; }
.r7 td, .r7 th { height: 30px; }
.r8 td, .r8 th { height: 32px; }
.r9 td, .r9 th { height: 32px; }
.r10 td, .r10 th { height: 32px; }
.r11 td, .r11 th { height: 31px; }
.r12 td, .r12 th { height: 33px; }
.r13 td, .r13 th { height: 35px; }
.r14 td, .r14 th { height: 47px; }
.r15 td, .r15 th { height: 33px; }
.r16 td, .r16 th { height: 32px; }
.r17 td, .r17 th { height: 33px; }
.r18 td, .r18 th { height: 32px; }
.r19 td, .r19 th { height: 33px; }
.r20 td, .r20 th { height: 300px; }
.grid .r5 td, .grid .r6 td {
    border-bottom: 2px solid #dedede;
}
.grid .n {
    text-align: right;
}
.grid .pad5 { padding-right: 5px; }
.grid .pad8 { padding-right: 8px; }
.grid .pad10 { padding-right: 10px; }
.grid .pad13 { padding-right: 13px; }
.grid .ind {
    padding-left: 16px;
}
.cash {
    float: left;
}
.acct .cash {
    margin-left: 4px;
}
.grid .dot {
    font-size: 18px;
    padding-left: 6px;
}
.grid .red {
    color: #e01010;
}
.grid .hl td {
    background: #ffff33;
    border-color: #ffff33;
}
.grid .hl .a {
    background: #fff;
    border-right-color: #fff;
    border-bottom-color: #eee;
}
.grid .r13 .sel-row {
    background: #d4d4d4;
    color: #217346;
    border-right: 2px solid #217346;
}
.grid .r13 td {
    border-bottom: 2px solid #d8d8d8;
}
.grid .sel-cell {
    position: relative;
}
.sel-cell::after {
    content: "";
    position: absolute;
    left: -1px;
    right: -1px;
    top: -2px;
    bottom: -2px;
    border: 1px solid #217346;
    border-bottom: 3px solid #3b5f4b;
}
.grid .ruled {
    box-shadow: inset 0 2px #444, inset 0 -3px #666;
}
.grid .r14 td {
    vertical-align: bottom;
    padding-bottom: 5px;
    border-bottom: 0;
}
.grid .r14 .a-org {
    background: #fbb927;
    border-right: 0;
}
.grid .big-t {
    font-size: 26px;
}
.grid .org td {
    background: #fbb927;
    border-color: #fbb927;
}
.grid .org .tm {
    font-family: "Liberation Serif", serif;
    font-size: 26px;
}
.sheet-rest {
    flex: 1;
    display: flex;
}
.rest-hd {
    width: 31px;
    background: #e9e8e7;
}
.rest-a {
    width: 11px;
    background: #fff;
}
.rest-org {
    flex: 1;
    background: #fbb927;
}

/* things lying on top of the sheet */
.cursor {
    position: absolute;
    left: 1015px;
    top: 481px;
}
.view-icon {
    position: absolute;
    left: 2172px;
    top: 1333px;
}
```
